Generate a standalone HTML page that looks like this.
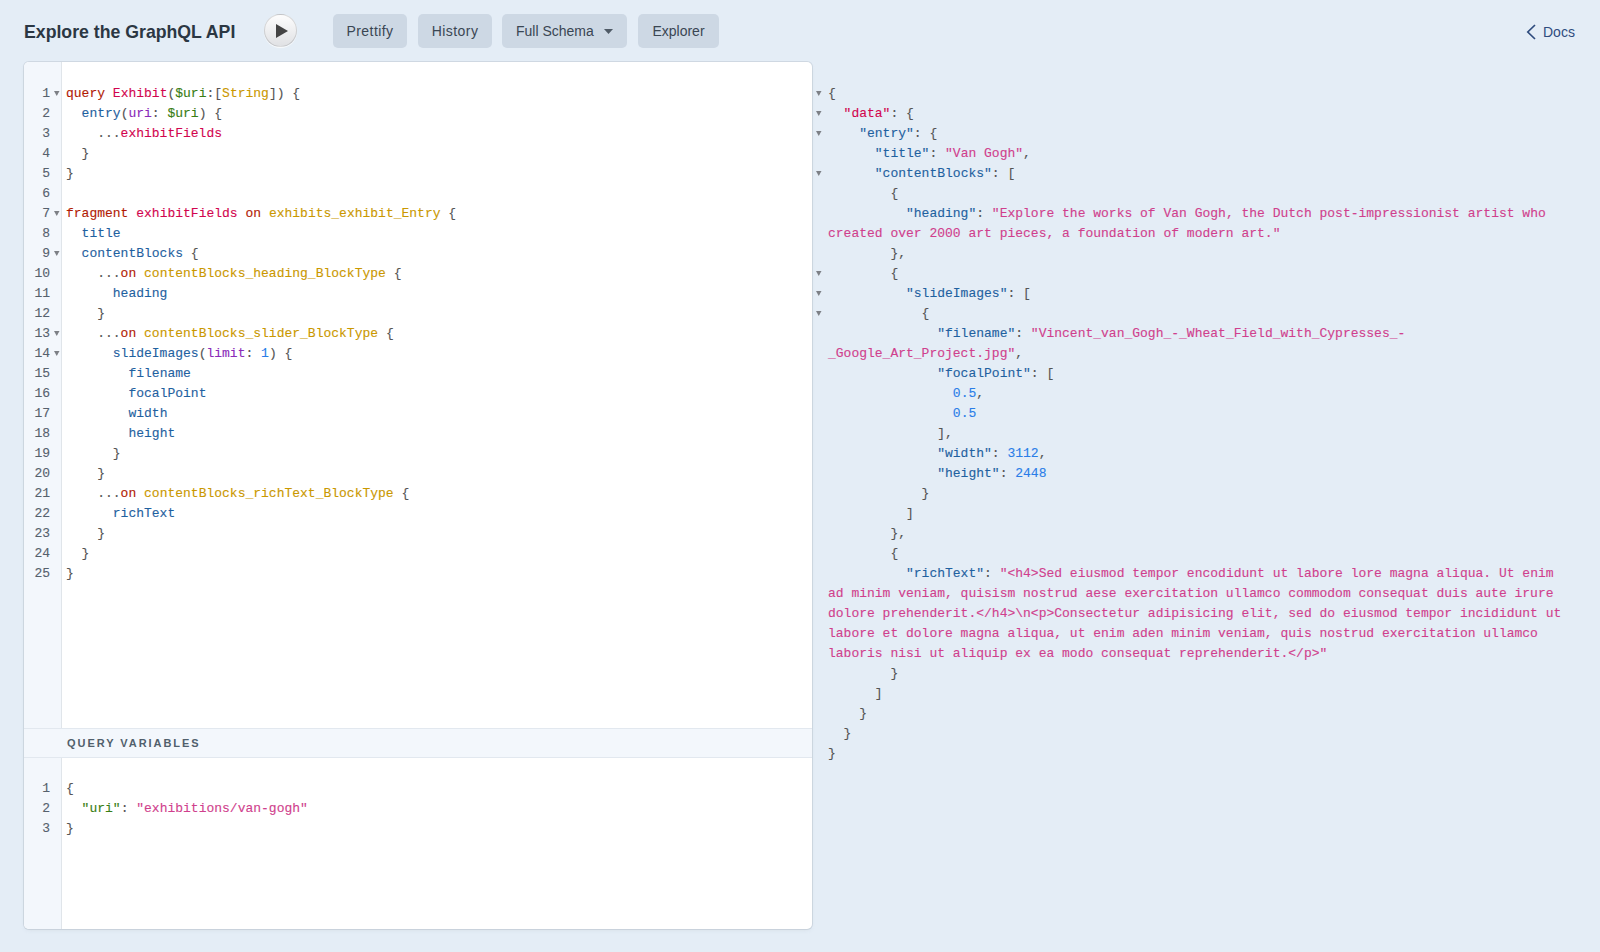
<!DOCTYPE html>
<html><head><meta charset="utf-8">
<style>
*{box-sizing:border-box;margin:0;padding:0}
html,body{width:1600px;height:952px;overflow:hidden;background:#e4edf6;font-family:"Liberation Sans",sans-serif}
.title{position:absolute;left:24px;top:19px;font-size:17.7px;font-weight:bold;color:#2b3743;line-height:26px;white-space:nowrap}
.exec{position:absolute;left:264px;top:14px;width:33px;height:33px;border-radius:50%;background:linear-gradient(#fdfdfd,#e0e1e4);border:1px solid rgba(0,0,0,0.13);box-shadow:0 1px 1px rgba(255,255,255,0.8)}
.exec svg{position:absolute;left:-1px;top:-1px}
.btn{position:absolute;top:14px;height:34px;border-radius:5px;background:#cdd8e4;color:#3a4653;font-size:14px;line-height:34px;text-align:center;white-space:nowrap}
.docs{position:absolute;left:1543px;top:22px;font-size:14px;line-height:20px;color:#2f4c7e;white-space:nowrap}
.chev{position:absolute;left:-17px;top:0px}
.panel{position:absolute;left:24px;top:62px;width:788px;height:867px;background:#fff;border-radius:5px;box-shadow:0 0 0 1px rgba(154,165,177,0.28),0 2px 5px -2px rgba(154,165,177,0.3);overflow:hidden}
.gutter{position:absolute;left:0;top:0;width:38px;height:100%;background:#f3f7fc;border-right:1px solid #e0e5ea}
.code{font-family:"Liberation Mono",monospace;font-size:13px;line-height:20px;white-space:pre;color:#555;-webkit-text-stroke:0.12px currentColor}
.qed{position:absolute;left:0;top:22px;width:100%}
.ln{position:absolute;left:0;width:26px;text-align:right;color:#56616d}
.fold{position:absolute;left:30px;width:6px;height:20px}
.fold svg{position:absolute;left:0;top:6px}
.tx{position:absolute;left:42px}
.vt{position:absolute;left:0;top:666px;width:100%;height:30px;background:#f3f7fc;border-top:1px solid #e2e8ef;border-bottom:1px solid #e2e8ef;font-size:11px;font-weight:bold;letter-spacing:1.95px;color:#515f6c;padding-left:43px;line-height:28px}
.res{position:absolute;left:0;top:84px;width:1600px}
.ved{position:absolute;left:0;top:717px;width:100%}
.fm{display:block;fill:#7d8086}
.res .tx{left:828px}
.res .fold{left:816px}
.k{color:#B11A04}.d{color:#D2054E}.p{color:#1F61A0}.a{color:#8B2BB9}.v{color:#397D13}.t{color:#CA9800}.n{color:#2a7de8}.s{color:#d03f8d}
</style></head><body>
<div class="title">Explore the GraphQL API</div>
<div class="exec"><svg width="34" height="34"><path d="M 12 10 L 24 17 L 12 24 z" fill="#444"/></svg></div>
<div class="btn" style="left:333px;width:74px;letter-spacing:0.45px">Prettify</div>
<div class="btn" style="left:418px;width:74px;letter-spacing:0.45px">History</div>
<div class="btn" style="left:502px;width:125px;text-align:left;padding-left:14px">Full Schema<svg style="position:absolute;left:102px;top:15px" width="9" height="6"><path d="M0 0 L9 0 L4.5 5 z" fill="#4f5a66"/></svg></div>
<div class="btn" style="left:638px;width:81px">Explorer</div>
<div class="docs"><svg class="chev" width="12" height="18"><path d="M9 3 L1.8 10 L9 17" fill="none" stroke="#2f4c7e" stroke-width="1.7"/></svg>Docs</div>

<div class="panel">
<div class="gutter"></div>
<div class="code qed"><div class="ln" style="top:0px">1</div><div class="fold" style="top:0px"><svg class="fm" width="6" height="6"><path d="M0 1 L5.5 1 L2.75 6 z"/></svg></div><div class="tx" style="top:0px"><span class="k">query</span> <span class="d">Exhibit</span>(<span class="v">$uri</span>:[<span class="t">String</span>]) {</div><div class="ln" style="top:20px">2</div><div class="tx" style="top:20px">  <span class="p">entry</span>(<span class="a">uri</span>: <span class="v">$uri</span>) {</div><div class="ln" style="top:40px">3</div><div class="tx" style="top:40px">    ...<span class="d">exhibitFields</span></div><div class="ln" style="top:60px">4</div><div class="tx" style="top:60px">  }</div><div class="ln" style="top:80px">5</div><div class="tx" style="top:80px">}</div><div class="ln" style="top:100px">6</div><div class="tx" style="top:100px"></div><div class="ln" style="top:120px">7</div><div class="fold" style="top:120px"><svg class="fm" width="6" height="6"><path d="M0 1 L5.5 1 L2.75 6 z"/></svg></div><div class="tx" style="top:120px"><span class="k">fragment</span> <span class="d">exhibitFields</span> <span class="k">on</span> <span class="t">exhibits_exhibit_Entry</span> {</div><div class="ln" style="top:140px">8</div><div class="tx" style="top:140px">  <span class="p">title</span></div><div class="ln" style="top:160px">9</div><div class="fold" style="top:160px"><svg class="fm" width="6" height="6"><path d="M0 1 L5.5 1 L2.75 6 z"/></svg></div><div class="tx" style="top:160px">  <span class="p">contentBlocks</span> {</div><div class="ln" style="top:180px">10</div><div class="tx" style="top:180px">    ...<span class="k">on</span> <span class="t">contentBlocks_heading_BlockType</span> {</div><div class="ln" style="top:200px">11</div><div class="tx" style="top:200px">      <span class="p">heading</span></div><div class="ln" style="top:220px">12</div><div class="tx" style="top:220px">    }</div><div class="ln" style="top:240px">13</div><div class="fold" style="top:240px"><svg class="fm" width="6" height="6"><path d="M0 1 L5.5 1 L2.75 6 z"/></svg></div><div class="tx" style="top:240px">    ...<span class="k">on</span> <span class="t">contentBlocks_slider_BlockType</span> {</div><div class="ln" style="top:260px">14</div><div class="fold" style="top:260px"><svg class="fm" width="6" height="6"><path d="M0 1 L5.5 1 L2.75 6 z"/></svg></div><div class="tx" style="top:260px">      <span class="p">slideImages</span>(<span class="a">limit</span>: <span class="n">1</span>) {</div><div class="ln" style="top:280px">15</div><div class="tx" style="top:280px">        <span class="p">filename</span></div><div class="ln" style="top:300px">16</div><div class="tx" style="top:300px">        <span class="p">focalPoint</span></div><div class="ln" style="top:320px">17</div><div class="tx" style="top:320px">        <span class="p">width</span></div><div class="ln" style="top:340px">18</div><div class="tx" style="top:340px">        <span class="p">height</span></div><div class="ln" style="top:360px">19</div><div class="tx" style="top:360px">      }</div><div class="ln" style="top:380px">20</div><div class="tx" style="top:380px">    }</div><div class="ln" style="top:400px">21</div><div class="tx" style="top:400px">    ...<span class="k">on</span> <span class="t">contentBlocks_richText_BlockType</span> {</div><div class="ln" style="top:420px">22</div><div class="tx" style="top:420px">      <span class="p">richText</span></div><div class="ln" style="top:440px">23</div><div class="tx" style="top:440px">    }</div><div class="ln" style="top:460px">24</div><div class="tx" style="top:460px">  }</div><div class="ln" style="top:480px">25</div><div class="tx" style="top:480px">}</div></div>
<div class="vt">QUERY VARIABLES</div>
<div class="code ved"><div class="ln" style="top:0px">1</div><div class="tx" style="top:0px">{</div><div class="ln" style="top:20px">2</div><div class="tx" style="top:20px">  <span class="v">&quot;uri&quot;</span>: <span class="s">&quot;exhibitions/van-gogh&quot;</span></div><div class="ln" style="top:40px">3</div><div class="tx" style="top:40px">}</div></div>
</div>
<div class="code res"><div class="fold" style="top:0px"><svg class="fm" width="6" height="6"><path d="M0 1 L5.5 1 L2.75 6 z"/></svg></div><div class="tx" style="top:0px">{</div><div class="fold" style="top:20px"><svg class="fm" width="6" height="6"><path d="M0 1 L5.5 1 L2.75 6 z"/></svg></div><div class="tx" style="top:20px">  <span class="d">&quot;data&quot;</span>: {</div><div class="fold" style="top:40px"><svg class="fm" width="6" height="6"><path d="M0 1 L5.5 1 L2.75 6 z"/></svg></div><div class="tx" style="top:40px">    <span class="p">&quot;entry&quot;</span>: {</div><div class="tx" style="top:60px">      <span class="p">&quot;title&quot;</span>: <span class="s">&quot;Van Gogh&quot;</span>,</div><div class="fold" style="top:80px"><svg class="fm" width="6" height="6"><path d="M0 1 L5.5 1 L2.75 6 z"/></svg></div><div class="tx" style="top:80px">      <span class="p">&quot;contentBlocks&quot;</span>: [</div><div class="tx" style="top:100px">        {</div><div class="tx" style="top:120px">          <span class="p">&quot;heading&quot;</span>: <span class="s">&quot;Explore the works of Van Gogh, the Dutch post-impressionist artist who</span></div><div class="tx" style="top:140px"><span class="s">created over 2000 art pieces, a foundation of modern art.&quot;</span></div><div class="tx" style="top:160px">        },</div><div class="fold" style="top:180px"><svg class="fm" width="6" height="6"><path d="M0 1 L5.5 1 L2.75 6 z"/></svg></div><div class="tx" style="top:180px">        {</div><div class="fold" style="top:200px"><svg class="fm" width="6" height="6"><path d="M0 1 L5.5 1 L2.75 6 z"/></svg></div><div class="tx" style="top:200px">          <span class="p">&quot;slideImages&quot;</span>: [</div><div class="fold" style="top:220px"><svg class="fm" width="6" height="6"><path d="M0 1 L5.5 1 L2.75 6 z"/></svg></div><div class="tx" style="top:220px">            {</div><div class="tx" style="top:240px">              <span class="p">&quot;filename&quot;</span>: <span class="s">&quot;Vincent_van_Gogh_-_Wheat_Field_with_Cypresses_-</span></div><div class="tx" style="top:260px"><span class="s">_Google_Art_Project.jpg&quot;</span>,</div><div class="tx" style="top:280px">              <span class="p">&quot;focalPoint&quot;</span>: [</div><div class="tx" style="top:300px">                <span class="n">0.5</span>,</div><div class="tx" style="top:320px">                <span class="n">0.5</span></div><div class="tx" style="top:340px">              ],</div><div class="tx" style="top:360px">              <span class="p">&quot;width&quot;</span>: <span class="n">3112</span>,</div><div class="tx" style="top:380px">              <span class="p">&quot;height&quot;</span>: <span class="n">2448</span></div><div class="tx" style="top:400px">            }</div><div class="tx" style="top:420px">          ]</div><div class="tx" style="top:440px">        },</div><div class="tx" style="top:460px">        {</div><div class="tx" style="top:480px">          <span class="p">&quot;richText&quot;</span>: <span class="s">&quot;&lt;h4&gt;Sed eiusmod tempor encodidunt ut labore lore magna aliqua. Ut enim</span></div><div class="tx" style="top:500px"><span class="s">ad minim veniam, quisism nostrud aese exercitation ullamco commodom consequat duis aute irure</span></div><div class="tx" style="top:520px"><span class="s">dolore prehenderit.&lt;/h4&gt;\n&lt;p&gt;Consectetur adipisicing elit, sed do eiusmod tempor incididunt ut</span></div><div class="tx" style="top:540px"><span class="s">labore et dolore magna aliqua, ut enim aden minim veniam, quis nostrud exercitation ullamco</span></div><div class="tx" style="top:560px"><span class="s">laboris nisi ut aliquip ex ea modo consequat reprehenderit.&lt;/p&gt;&quot;</span></div><div class="tx" style="top:580px">        }</div><div class="tx" style="top:600px">      ]</div><div class="tx" style="top:620px">    }</div><div class="tx" style="top:640px">  }</div><div class="tx" style="top:660px">}</div></div>
</body></html>
